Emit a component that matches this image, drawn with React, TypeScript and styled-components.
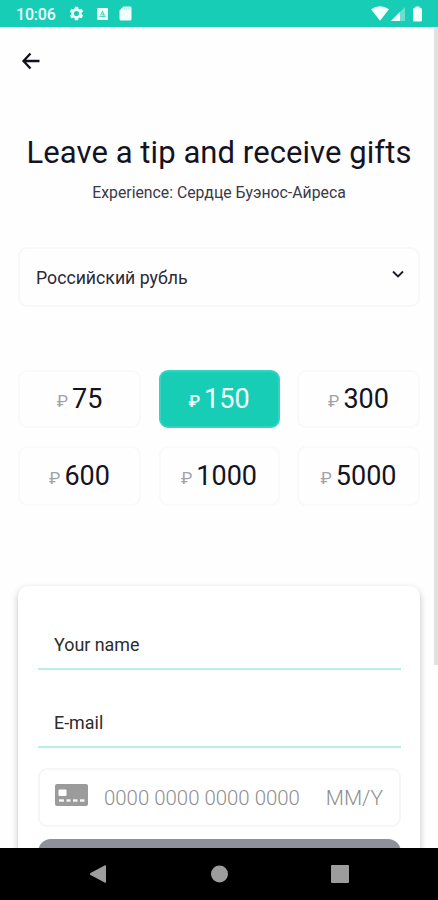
import React from "react";
import styled, { createGlobalStyle } from "styled-components";

const GlobalStyle = createGlobalStyle`
  * { box-sizing: border-box; }
  body { margin: 0; background: #fff; }
  button, input { font: inherit; }
`;

const Screen = styled.div`
  width: 438px;
  height: 900px;
  display: flex;
  flex-direction: column;
  overflow: hidden;
  background: #fefefe;
  color: #15131f;
  font-family: Roboto, "Noto Sans", sans-serif;
`;

const StatusBar = styled.header`
  flex: none;
  height: 27px;
  padding: 0 15px 0 16px;
  display: flex;
  align-items: center;
  background: #17cdb5;
  color: #f2fffc;
  svg { display: block; }
`;

const Clock = styled.span`
  width: 40px;
  margin: 2px 12px 0 0;
  font-size: 16px;
  font-weight: 500;
  line-height: 20px;
  letter-spacing: -0.2px;
`;

const StatusIcons = styled.div<{ $gap: number }>`
  display: flex;
  align-items: center;
  gap: ${(p) => p.$gap}px;
`;

const Spacer = styled.div`
  flex: 1;
`;

const Body = styled.div`
  height: 821px;
  display: flex;
  overflow: hidden;
`;

const Content = styled.main`
  width: 433px;
  flex: none;
  padding: 0 13px 0 18px;
`;

const ScrollTrack = styled.div`
  width: 5px;
`;

const ScrollThumb = styled.div`
  height: 638px;
  margin-left: 1px;
  background: #e1e1e1;
`;

const BackButton = styled.button`
  display: block;
  width: 26px;
  height: 26px;
  margin: 21px 0 0;
  padding: 0;
  border: 0;
  background: none;
  color: #15101f;
  svg { display: block; }
`;

const Title = styled.h1`
  margin: 59px -10px 0;
  height: 40px;
  text-align: center;
  white-space: nowrap;
  font-size: 31px;
  line-height: 40px;
  font-weight: 400;
  letter-spacing: 0.07px;
`;

const Subtitle = styled.p`
  margin: 10px 0 0;
  text-align: center;
  font-size: 15.8px;
  line-height: 20px;
  color: #3b3946;
`;

const Select = styled.button`
  width: 402px;
  height: 60px;
  margin: 44px 0 0;
  padding: 2px 14px 0 16px;
  display: flex;
  align-items: center;
  justify-content: space-between;
  border: 2px solid #f7f7f7;
  border-radius: 9px;
  background: #fefefe;
  color: #2b2937;
  font-size: 17.7px;
  svg { margin-top: -8px; }
`;

const Amounts = styled.div`
  margin-top: 63px;
  display: grid;
  grid-template-columns: 123px 121px 123px;
  grid-template-rows: 58px 60px;
  column-gap: 17.5px;
  row-gap: 18px;
`;

const Amount = styled.button<{ $active: boolean }>`
  padding: 0;
  display: flex;
  align-items: center;
  justify-content: center;
  gap: 4px;
  border: 2px solid ${(p) => (p.$active ? "#35d3bf" : "#f8f9f9")};
  border-radius: 9px;
  background: ${(p) => (p.$active ? "#17cdb5" : "#fefefe")};
  color: ${(p) => (p.$active ? "#f4fffd" : "#15131f")};
  font-size: 27px;
  line-height: 54px;
`;

const Currency = styled.span<{ $active: boolean }>`
  padding-top: 4px;
  line-height: 50px;
  font-size: 17px;
  font-weight: ${(p) => (p.$active ? 500 : 400)};
  color: ${(p) => (p.$active ? "#effffc" : "#a2a2a6")};
`;

const PaymentCard = styled.section`
  height: 320px;
  margin-top: 80px;
  padding: 25px 19px 0 20px;
  border-radius: 10px;
  background: #fff;
  box-shadow: 0 3px 7px rgba(0, 0, 0, 0.24);
`;

const Field = styled.label`
  height: 59px;
  margin-bottom: 19px;
  padding: 11px 16px 0;
  display: flex;
  align-items: center;
  border-bottom: 2px solid #b8efe2;
  color: #2c2c2c;
  font-size: 17.9px;
  line-height: 22px;
`;

const CardNumber = styled.div`
  height: 59px;
  margin-top: 20px;
  padding: 0 16px 0 15px;
  display: flex;
  align-items: center;
  border: 2px solid #f6f6f6;
  border-radius: 9px;
  color: #8e8e8e;
  font-size: 20.4px;
  font-weight: 300;
  white-space: nowrap;
  svg { flex: none; display: block; margin: -5px 16px 0 0; }
`;

const Expiry = styled.span`
  font-size: 21px;
`;

const PayButton = styled.button`
  display: block;
  width: 100%;
  height: 54px;
  margin-top: 12px;
  border: 0;
  border-radius: 13px;
  background: #8e9199;
`;

const NavBar = styled.nav`
  flex: none;
  height: 52px;
  padding: 0 89px 0 88px;
  display: flex;
  align-items: center;
  justify-content: space-between;
  background: #000;
  svg { display: block; }
`;

const amounts = ["75", "150", "300", "600", "1000", "5000"];

const SettingsIcon = () => (
  <svg width="17" height="17" viewBox="0 0 24 24" fill="currentColor">
    <path d="M19.14 12.94a7 7 0 0 0 0-1.88l2.03-1.58a.5.5 0 0 0 .12-.61l-1.92-3.32a.5.5 0 0 0-.59-.22l-2.39.96a7 7 0 0 0-1.62-.94l-.36-2.54A.5.5 0 0 0 13.93 2.4h-3.84a.5.5 0 0 0-.47.41l-.36 2.54a7 7 0 0 0-1.62.94l-2.39-.96a.5.5 0 0 0-.59.22L2.74 8.87a.5.5 0 0 0 .12.61l2.03 1.58a7 7 0 0 0 0 1.88l-2.03 1.58a.5.5 0 0 0-.12.61l1.92 3.32c.12.22.37.29.59.22l2.39-.96c.5.38 1.03.7 1.62.94l.36 2.54c.05.24.24.41.48.41h3.84c.24 0 .44-.17.47-.41l.36-2.54a7 7 0 0 0 1.62-.94l2.39.96c.22.08.47 0 .59-.22l1.92-3.32a.5.5 0 0 0-.12-.61zM12 15.6a3.6 3.6 0 1 1 0-7.2 3.6 3.6 0 0 1 0 7.2z" />
  </svg>
);

export default function App() {
  return (
    <>
      <GlobalStyle />
      <Screen>
        <StatusBar>
          <Clock>10:06</Clock>
          <StatusIcons $gap={11.5}>
            <SettingsIcon />
            <svg width="11" height="12" viewBox="0 0 11 12">
              <rect width="11" height="12" rx="1" fill="currentColor" />
              <path d="M2.500 8.500h6M3.500 7.500 5.500 3.500l2 4M5 6.500l2.500 1" fill="none" stroke="#4bd4c2" strokeWidth="1.1" />
            </svg>
            <svg width="13" height="15" viewBox="0 0 13 15">
              <path d="M4.4.5H11a1.5 1.5 0 0 1 1.5 1.5v11a1.5 1.5 0 0 1-1.5 1.5H2A1.5 1.5 0 0 1 .5 13V4.5z" fill="currentColor" />
              <path d="M5.4 2v2M7.6 2v2M9.8 2v2" stroke="#a9ece2" strokeWidth="0.9" />
            </svg>
          </StatusIcons>
          <Spacer />
          <StatusIcons $gap={2}>
            <svg width="18" height="15" viewBox="0 0 18 15">
              <path d="M0 3.2Q9-2.7 18 3.2L9 14.8z" fill="currentColor" />
            </svg>
            <svg width="14" height="14" viewBox="0 0 14 14">
              <path d="M0 14 14 0v14z" fill="#6cded0" />
              <path d="M0 14 9 5v9z" fill="currentColor" />
            </svg>
            <svg width="16" height="16" viewBox="0 0 16 16">
              <path d="M8.500.5h4v1.200h1.200q1.300.4 1.300 1.800v10.700q0 1.300-1.300 1.300H7.300Q6 15.500 6 14.200V3.500q0-1.400 1.300-1.800h1.200z" fill="currentColor" />
            </svg>
          </StatusIcons>
        </StatusBar>
        <Body>
          <Content>
            <BackButton aria-label="Back">
              <svg width="26" height="26" viewBox="0 0 26 26" fill="none" stroke="currentColor" strokeWidth="2.3">
                <path d="M21.500 13H6M12.500 5.500 5.500 13l7 7.500" />
              </svg>
            </BackButton>
            <Title>Leave a tip and receive gifts</Title>
            <Subtitle>Experience: Сердце Буэнос-Айреса</Subtitle>
            <Select>
              <span>Российский рубль</span>
              <svg width="12" height="8" viewBox="0 0 12 8" fill="none" stroke="#1b1826" strokeWidth="1.800">
                <path d="M1 1.500l5 5 5-5" />
              </svg>
            </Select>
            <Amounts>
              {amounts.map((value) => (
                <Amount key={value} $active={value === "150"}>
                  <Currency $active={value === "150"}>₽</Currency>
                  <span>{value}</span>
                </Amount>
              ))}
            </Amounts>
            <PaymentCard>
              <Field>Your name</Field>
              <Field>E-mail</Field>
              <CardNumber>
                <svg width="33" height="22" viewBox="0 0 33 22">
                  <rect width="33" height="22" rx="2" fill="#9b9b9b" />
                  <rect x="3.500" y="5.500" width="8" height="6.500" rx="1" fill="#fff" />
                  <path d="M4 16.500h5M11.500 16.500h4M18 16.500h4.500M25 16.500h4.500" stroke="#f4f4f4" strokeWidth="2.500" />
                </svg>
                <span>0000 0000 0000 0000</span>
                <Spacer />
                <Expiry>MM/Y</Expiry>
              </CardNumber>
              <PayButton aria-label="Pay" />
            </PaymentCard>
          </Content>
          <ScrollTrack>
            <ScrollThumb />
          </ScrollTrack>
        </Body>
        <NavBar>
          <svg width="18" height="18" viewBox="0 0 18 18">
            <path d="M18 .8v16.400a.8.8 0 0 1-1 .6L2.500 10q-1.200-1 0-2L17 .2a.8.8 0 0 1 1 .6z" fill="#9d9d9d" />
          </svg>
          <svg width="18" height="18" viewBox="0 0 18 18">
            <circle cx="9.500" cy="9" r="8.500" fill="#9d9d9d" />
          </svg>
          <svg width="18" height="18" viewBox="0 0 18 18">
            <rect width="18" height="18" rx="1" fill="#9d9d9d" />
          </svg>
        </NavBar>
      </Screen>
    </>
  );
}
